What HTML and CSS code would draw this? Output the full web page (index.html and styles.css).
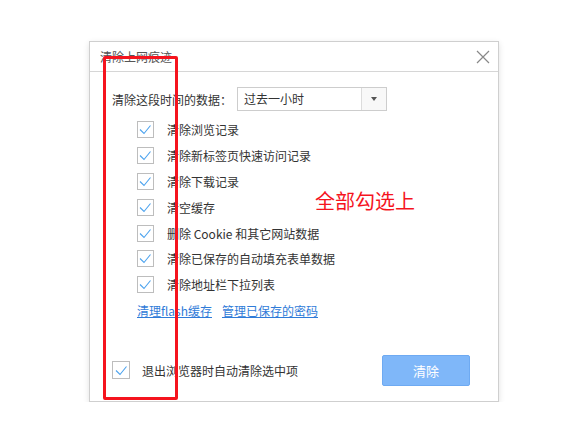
FILE: index.html
```html
<!DOCTYPE html>
<html lang="zh-CN">
<head>
    <meta charset="UTF-8">
    <title>清除上网痕迹</title>
    <link rel="stylesheet" href="styles.css">
</head>
<body>
    <div class="dialog">
        <div class="title-bar">
            <span class="title">清除上网痕迹</span>
            <svg class="close" width="14" height="14" viewBox="0 0 14 14">
                <path d="M1 1L13 13M13 1L1 13" stroke="#888" stroke-width="1.2" fill="none"/>
            </svg>
        </div>
        <div class="content">
            <div class="range-row">
                <span class="label">清除这段时间的数据：</span>
                <div class="select">
                    <span class="select-text">过去一小时</span>
                    <span class="select-arrow"></span>
                </div>
            </div>
            <ul class="items">
                <li><span class="box"><svg width="17" height="17" viewBox="0 0 17 17"><polyline points="3,8.5 7,12.5 13.5,4.5"/></svg></span>清除浏览记录</li>
                <li><span class="box"><svg width="17" height="17" viewBox="0 0 17 17"><polyline points="3,8.5 7,12.5 13.5,4.5"/></svg></span>清除新标签页快速访问记录</li>
                <li><span class="box"><svg width="17" height="17" viewBox="0 0 17 17"><polyline points="3,8.5 7,12.5 13.5,4.5"/></svg></span>清除下载记录</li>
                <li><span class="box"><svg width="17" height="17" viewBox="0 0 17 17"><polyline points="3,8.5 7,12.5 13.5,4.5"/></svg></span>清空缓存</li>
                <li><span class="box"><svg width="17" height="17" viewBox="0 0 17 17"><polyline points="3,8.5 7,12.5 13.5,4.5"/></svg></span>删除 Cookie 和其它网站数据</li>
                <li><span class="box"><svg width="17" height="17" viewBox="0 0 17 17"><polyline points="3,8.5 7,12.5 13.5,4.5"/></svg></span>清除已保存的自动填充表单数据</li>
                <li><span class="box"><svg width="17" height="17" viewBox="0 0 17 17"><polyline points="3,8.5 7,12.5 13.5,4.5"/></svg></span>清除地址栏下拉列表</li>
            </ul>
            <div class="links">
                <a href="#">清理flash缓存</a>
                <a href="#">管理已保存的密码</a>
            </div>
            <div class="footer">
                <label class="auto-clear"><span class="box"><svg width="17" height="17" viewBox="0 0 17 17"><polyline points="3,8.5 7,12.5 13.5,4.5"/></svg></span>退出浏览器时自动清除选中项</label>
                <button class="clear-btn">清除</button>
            </div>
        </div>
    </div>
    <div class="mark-box"></div>
    <div class="mark-text">全部勾选上</div>
</body>
</html>
```

FILE: styles.css
```css
body {
    margin: 0;
    background: #fff;
    font-family: "Microsoft YaHei", "Noto Sans CJK SC", sans-serif;
    font-size: 12px;
    color: #333;
}
.dialog {
    width: 408px;
    margin: 41px 0 0 89px;
    border: 1px solid #cfcfcf;
    box-shadow: 0 2px 6px rgba(0, 0, 0, 0.12);
    background: #fff;
}
.title-bar {
    height: 29px;
    display: flex;
    align-items: center;
    justify-content: space-between;
    padding: 0 8px 0 10px;
    border-bottom: 1px solid #d6d6d6;
}
.title {
    color: #555;
}
.content {
    padding: 15px 22px 15px 22px;
}
.range-row {
    display: flex;
    align-items: center;
}
.label {
    width: 125px;
}
.select {
    display: flex;
    width: 148px;
    height: 22px;
    border: 1px solid #cdcdcd;
}
.select-text {
    flex: 1;
    padding-left: 6px;
    line-height: 22px;
}
.select-arrow {
    width: 24px;
    border-left: 1px solid #dcdcdc;
    background: #f8f8f8;
    display: flex;
    align-items: center;
    justify-content: center;
}
.select-arrow::after {
    content: "";
    border-left: 3.5px solid transparent;
    border-right: 3.5px solid transparent;
    border-top: 4px solid #555;
}
.items {
    list-style: none;
    margin: 6px 0 0 25px;
    padding: 0;
}
.items li {
    height: 25.8px;
    display: flex;
    align-items: center;
}
.box {
    width: 15px;
    height: 15px;
    border: 1px solid #bdbdbd;
    margin-right: 13px;
    flex: none;
    display: flex;
    align-items: center;
    justify-content: center;
}
.box svg {
    flex: none;
}
.box polyline {
    fill: none;
    stroke: #4da3ee;
    stroke-width: 1.1;
}
.links {
    height: 26px;
    margin-left: 25px;
    display: flex;
    align-items: center;
    gap: 10px;
}
.links a {
    color: #2f7bd8;
    text-decoration: underline;
}
.footer {
    margin-top: 31px;
    display: flex;
    align-items: center;
    justify-content: space-between;
    padding-right: 6px;
}
.auto-clear {
    display: flex;
    align-items: center;
}
.auto-clear .box {
    width: 16px;
    height: 16px;
    margin-right: 12px;
}
.clear-btn {
    width: 88px;
    height: 31px;
    border: 1px solid #6eaaf2;
    border-radius: 2px;
    background: #7fb7f9;
    color: #fff;
    font-family: inherit;
    font-size: 13px;
}
.mark-box {
    position: absolute;
    left: 103px;
    top: 56px;
    width: 69px;
    height: 338px;
    border: 3px solid #f5141e;
    border-radius: 2px;
}
.mark-text {
    position: absolute;
    left: 315px;
    top: 186px;
    font-size: 20px;
    color: #f5141e;
}
```
